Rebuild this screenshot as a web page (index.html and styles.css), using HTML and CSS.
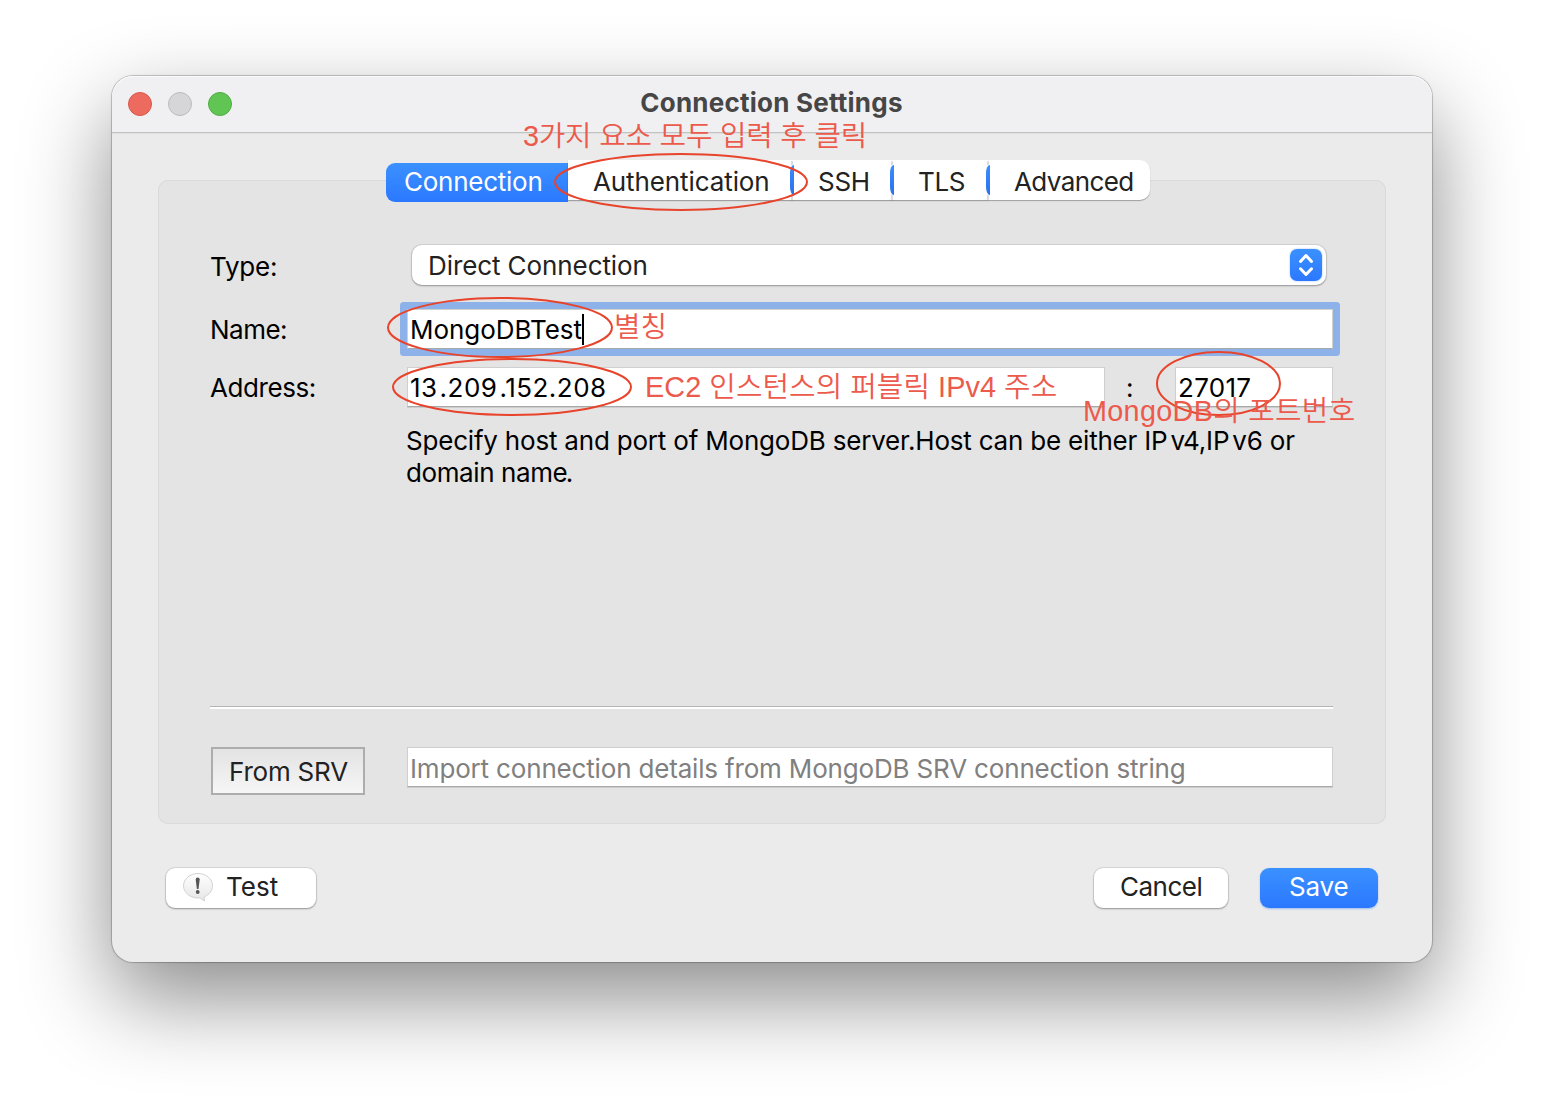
FILE: index.html
```html
<!DOCTYPE html>
<html lang="ko">
<head>
<meta charset="utf-8">
<title>Connection Settings</title>
<link rel="stylesheet" href="styles.css">
</head>
<body>
<main class="window">
  <header class="titlebar">
    <div class="lights"><i class="light close"></i><i class="light minimize"></i><i class="light zoom"></i></div>
    <h1 class="title">Connection Settings</h1>
  </header>
  <div class="content">
    <nav class="tabs">
      <div class="tab active">Connection</div>
      <div class="tab auth">Authentication</div>
      <div class="tab ssh">SSH</div>
      <div class="tab tls">TLS</div>
      <div class="tab advanced">Advanced</div>
    </nav>
    <section class="panel">
      <div class="row type-row">
        <div class="label">Type:</div>
        <div class="select"><span class="select-value">Direct Connection</span>
          <span class="stepper"><svg width="32" height="32" viewBox="0 0 32 32"><path d="M10.500 12.500 16 6.500 21.500 12.500M10.500 19.800 16 25.500 21.500 19.800"/></svg></span>
        </div>
      </div>
      <div class="row name-row">
        <div class="label">Name:</div>
        <div class="field focused">MongoDBTest<i class="caret"></i></div>
      </div>
      <div class="row address-row">
        <div class="label">Address:</div>
        <div class="field host">13<span class="dot-gap">.</span>209<span class="dot-gap">.</span>152.208</div>
        <span class="colon">:</span>
        <div class="field port">27017</div>
      </div>
      <p class="hint">Specify host and port of MongoDB server.Host can be either I<span class="loose">P</span><span class="tight">v</span>4,I<span class="loose">P</span>v6 or<br><span class="hint-end">domain nam<span class="tight">e</span>.</span></p>
      <hr class="rule">
      <div class="row srv-row">
        <div class="srv-button">From SRV</div>
        <div class="field placeholder">Import connection details from MongoDB SRV connection string</div>
      </div>
    </section>
    <footer class="footer">
      <div class="button test">
        <svg class="bubble" width="32" height="32" viewBox="0 0 32 32">
          <defs><linearGradient id="bubble-fill" x1="0" y1="0" x2="0" y2="1"><stop offset="0" stop-color="#fff"/><stop offset="1" stop-color="#e6e6e6"/></linearGradient></defs>
          <path class="bubble-shape" d="M16 2.500C8 2.500 1.500 8 1.500 14.800S8 27 16 27q1 0 2-.1Q20 29 22.600 29.800 22 27.600 22.400 25.800C27.500 23.500 30.500 19.500 30.500 14.800 30.500 8 24 2.500 16 2.500Z"/>
          <path class="bubble-mark" d="M13.700 8.500Q13.700 6.500 15.700 6.500T17.700 8.500L16.500 18H14.900Z"/><circle class="bubble-mark" cx="15.700" cy="21" r="1.900"/>
        </svg>
        <span>Test</span>
      </div>
      <div class="button cancel">Cancel</div>
      <div class="button save">Save</div>
    </footer>
  </div>
</main>
<svg class="rings" width="1544" height="1110" viewBox="0 0 1544 1110">
  <ellipse cx="681" cy="182" rx="126" ry="28"/>
  <ellipse cx="500" cy="327.500" rx="112" ry="29.500"/>
  <ellipse cx="512" cy="387" rx="119" ry="28"/>
  <ellipse cx="1218.500" cy="383.500" rx="61.500" ry="31.500"/>
</svg>
<div class="note note-click">3가지 요소 모두 입력 후 클릭</div>
<div class="note note-alias">별칭</div>
<div class="note note-ip">EC2 인스턴스의 퍼블릭 IPv4 주소</div>
<div class="note note-port">MongoDB의 포트번호</div>
</body>
</html>
```
FILE: styles.css
```css
* { box-sizing: border-box; }
body { margin: 0; padding: 76px 112px; width: 1544px; height: 1110px; overflow: hidden; background: #fff; font: 26px/40px Inter, "Noto Sans CJK KR", sans-serif; color: #000; position: relative; white-space: nowrap; }

/* Window frame */
.window { width: 1320px; height: 886px; border-radius: 21px; background: #ebebeb; box-shadow: 0 0 0 1px rgba(0,0,0,.17), 0 0 3px rgba(0,0,0,.12), 0 36px 88px rgba(0,0,0,.46); }
.titlebar { height: 57px; border-bottom: 1px solid #c2c2c3; border-radius: 21px 21px 0 0; background: #f0f0f2; display: grid; grid-template-columns: 1fr auto 1fr; align-items: center; box-shadow: inset 0 1px 0 #fafafb, 0 1px 0 #e0e0e0; }
.lights { display: flex; gap: 16px; padding-left: 16px; }
.light { width: 24px; height: 24px; border-radius: 50%; border: 1px solid; }
.close { background: #ed6a5e; border-color: #d8584d; }
.minimize { background: #d6d6d8; border-color: #bbb; }
.zoom { background: #61c554; border-color: #4fad42; }
.title { margin: 0 1px 2px 0; font-size: 26px; font-weight: 700; color: #464646; line-height: 40px; letter-spacing: .23px; }
.content { padding: 27px 46px 0; }

/* Tab strip */
.tabs { position: relative; display: flex; margin-left: 228px; width: 764px; height: 42px; color: #222; }
.tab { position: relative; height: 40px; line-height: 43px; background: #fff; box-shadow: 0 1px 1px rgba(0,0,0,.3); }
.active { width: 182px; height: 39px; margin-top: 3px; padding-left: 18px; line-height: 37px; letter-spacing: -.25px; color: #fff; background: linear-gradient(#3b91ff, #2b78ff); border-radius: 9px 0 0 9px; box-shadow: none; }
.auth { width: 224px; padding-left: 25px; letter-spacing: -.1px; }
.ssh { width: 100px; padding-left: 26px; letter-spacing: -.25px; }
.tls { width: 96px; padding-left: 26px; letter-spacing: -.35px; }
.advanced { width: 162px; padding-left: 26px; letter-spacing: -.6px; border-radius: 0 10px 10px 0; }
.ssh::before, .tls::before, .advanced::before { content: ""; position: absolute; left: -2px; top: 5px; width: 4px; height: 30px; border-radius: 4px 0 0 4px / 8px 0 0 8px; background: linear-gradient(#3b8cff, #2b70ee); }
.ssh::after, .tls::after, .advanced::after { content: ""; position: absolute; left: -1px; top: 1px; width: 2px; height: 39px; background: linear-gradient(#ddd 4px, transparent 4px 34px, #ddd 34px); }

/* Form panel */
.panel { height: 644px; margin-top: -22px; padding: 65px 53px 0 52px; border-radius: 10px; background: #e4e4e4; box-shadow: inset 0 0 0 1px #dadada; }
.row { display: flex; }
.label { width: 197px; flex: none; letter-spacing: -.2px; }
.type-row { height: 64px; line-height: 44px; }
.select { width: 914px; height: 40px; margin-left: 5px; padding: 0 4px 0 16px; border-radius: 10px; display: flex; align-items: center; justify-content: space-between; letter-spacing: -.09px; background: #fff; color: #222; box-shadow: 0 0 0 1px rgba(0,0,0,.08), 0 1px 2px rgba(0,0,0,.3); }
.select-value { padding-top: 2px; }
.stepper { width: 32px; height: 32px; border-radius: 7px; background: linear-gradient(#3b91ff, #2b78ff); box-shadow: 0 0 2px rgba(43,120,255,.5); }
.stepper svg { display: block; }
.stepper path { fill: none; stroke: #fff; stroke-width: 3; stroke-linecap: round; stroke-linejoin: round; }
.name-row { height: 58px; line-height: 42px; }
.address-row { height: 58px; line-height: 42px; }
.address-row .label { letter-spacing: -.42px; }
.name-row .label { letter-spacing: -.5px; }
.field { flex: 1; height: 40px; padding-left: 2px; background: #fff; border: 1px solid #cfcfcf; border-bottom-color: #a8a8a8; box-shadow: 0 1px 0 #cdcdcd; line-height: 40px; }
.focused { display: flex; letter-spacing: -.04px; border-color: #d2d2cc; border-bottom-color: #a5aaa8; box-shadow: 0 0 0 7px #8db2ea; border-radius: 1px; }
.caret { width: 2px; height: 31px; margin-top: 4px; background: #000; }
.host { flex: 0 0 698px; letter-spacing: .48px; }
.dot-gap { margin-left: 2px; }
.colon { width: 70px; padding-left: 21px; }
.port { flex: 0 0 158px; letter-spacing: .3px; }
.hint { margin: 0; height: 281px; padding-left: 196px; line-height: 32px; letter-spacing: -.2px; }
.hint-end { letter-spacing: -.4px; }
.loose { letter-spacing: 2.8px; }
.tight { letter-spacing: -2px; }
.rule { margin: 0; height: 3px; border: 0; border-top: 1px solid #b5b5b5; background: #fff; }
.srv-row { margin-top: 38px; align-items: flex-start; }
.srv-button { width: 154px; height: 48px; margin: 0 42px 0 1px; padding-left: 16px; line-height: 46px; letter-spacing: -.2px; border: 2px solid #adadad; background: linear-gradient(#e3e3e3, #f6f6f6); color: #222; }
.placeholder { color: #808080; letter-spacing: -.17px; line-height: 42px; }

/* Footer buttons */
.footer { display: flex; padding: 44px 8px 0; }
.button { height: 40px; display: flex; padding-bottom: 2px; align-items: center; border-radius: 9px; background: #fff; color: #222; box-shadow: 0 0 0 1px rgba(0,0,0,.08), 0 1px 2px rgba(0,0,0,.32); }
.test { width: 150px; gap: 12px; padding-left: 16px; margin-right: auto; }
.bubble { flex: none; }
.bubble-shape { fill: url(#bubble-fill); stroke: #d2d2d2; stroke-width: 1; }
.bubble-mark { fill: #555; }
.cancel { width: 134px; padding-left: 26px; margin-right: 32px; letter-spacing: -.5px; }
.save { width: 118px; padding-left: 29px; letter-spacing: -.2px; color: #fff; background: linear-gradient(#3b91ff, #2b78ff); box-shadow: 0 1px 2px rgba(43,120,255,.4); }

/* Red annotations over the window */
.rings { position: absolute; left: 0; top: 0; }
.rings ellipse { fill: none; stroke: #e8432b; stroke-width: 2; }
.note { position: absolute; color: #ec5a4c; font: 28.8px/40px "Liberation Sans", "Noto Sans CJK KR", sans-serif; font-weight: 350; }
.note-click { left: 523px; top: 116px; letter-spacing: -.2px; }
.note-alias { left: 614px; top: 307px; }
.note-ip { left: 645px; top: 367px; letter-spacing: .08px; }
.note-port { left: 1083px; top: 391px; letter-spacing: .3px; }
```
